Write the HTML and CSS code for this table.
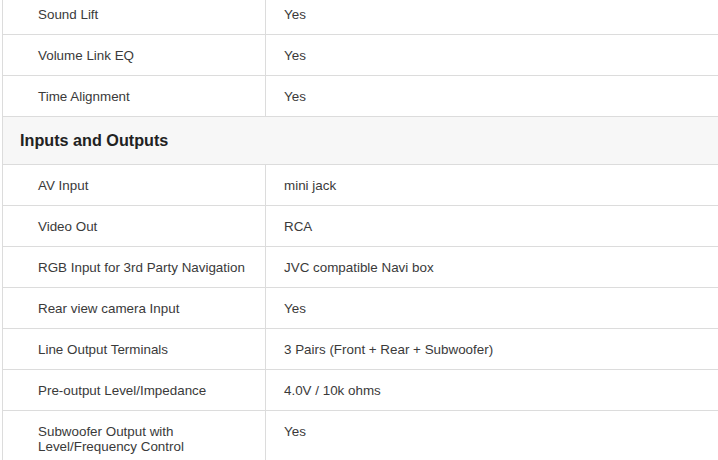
FILE: index.html
```html
<!DOCTYPE html>
<html>
<head>
<meta charset="utf-8">
<link rel="stylesheet" href="styles.css">
</head>
<body>
<table class="specs">
  <colgroup><col class="c-label"><col class="c-value"></colgroup>
  <tbody>
    <tr><td class="label">Sound Lift</td><td class="value">Yes</td></tr>
    <tr><td class="label">Volume Link EQ</td><td class="value">Yes</td></tr>
    <tr><td class="label">Time Alignment</td><td class="value">Yes</td></tr>
    <tr class="group"><th colspan="2">Inputs and Outputs</th></tr>
    <tr><td class="label">AV Input</td><td class="value">mini jack</td></tr>
    <tr><td class="label">Video Out</td><td class="value">RCA</td></tr>
    <tr><td class="label">RGB Input for 3rd Party Navigation</td><td class="value">JVC compatible Navi box</td></tr>
    <tr><td class="label">Rear view camera Input</td><td class="value">Yes</td></tr>
    <tr><td class="label">Line Output Terminals</td><td class="value">3 Pairs (Front + Rear + Subwoofer)</td></tr>
    <tr><td class="label">Pre-output Level/Impedance</td><td class="value">4.0V / 10k ohms</td></tr>
    <tr><td class="label">Subwoofer Output with<br>Level/Frequency Control</td><td class="value">Yes</td></tr>
  </tbody>
</table>
</body>
</html>
```

FILE: styles.css
```css
html, body {
  margin: 0;
  padding: 0;
  background: #fff;
  overflow: hidden;
}
body {
  padding-left: 2px;
  font-family: "Liberation Sans", Arial, sans-serif;
}
.specs {
  border-collapse: collapse;
  width: 730px;
  margin-top: -7px;
  table-layout: fixed;
}
.c-label { width: 263px; }
.specs td, .specs th {
  border: 1px solid #dcdcdc;
  text-align: left;
  vertical-align: top;
}
.specs td {
  font-size: 13.4px;
  line-height: 15px;
  color: #3a3a3a;
  padding: 13px 18px 12px 18px;
}
.specs td.label {
  padding-left: 35px;
}
.group th {
  background: #f7f7f7;
  font-size: 16.2px;
  font-weight: bold;
  color: #222;
  line-height: 18px;
  padding: 14px 17px 15px;
}
```
